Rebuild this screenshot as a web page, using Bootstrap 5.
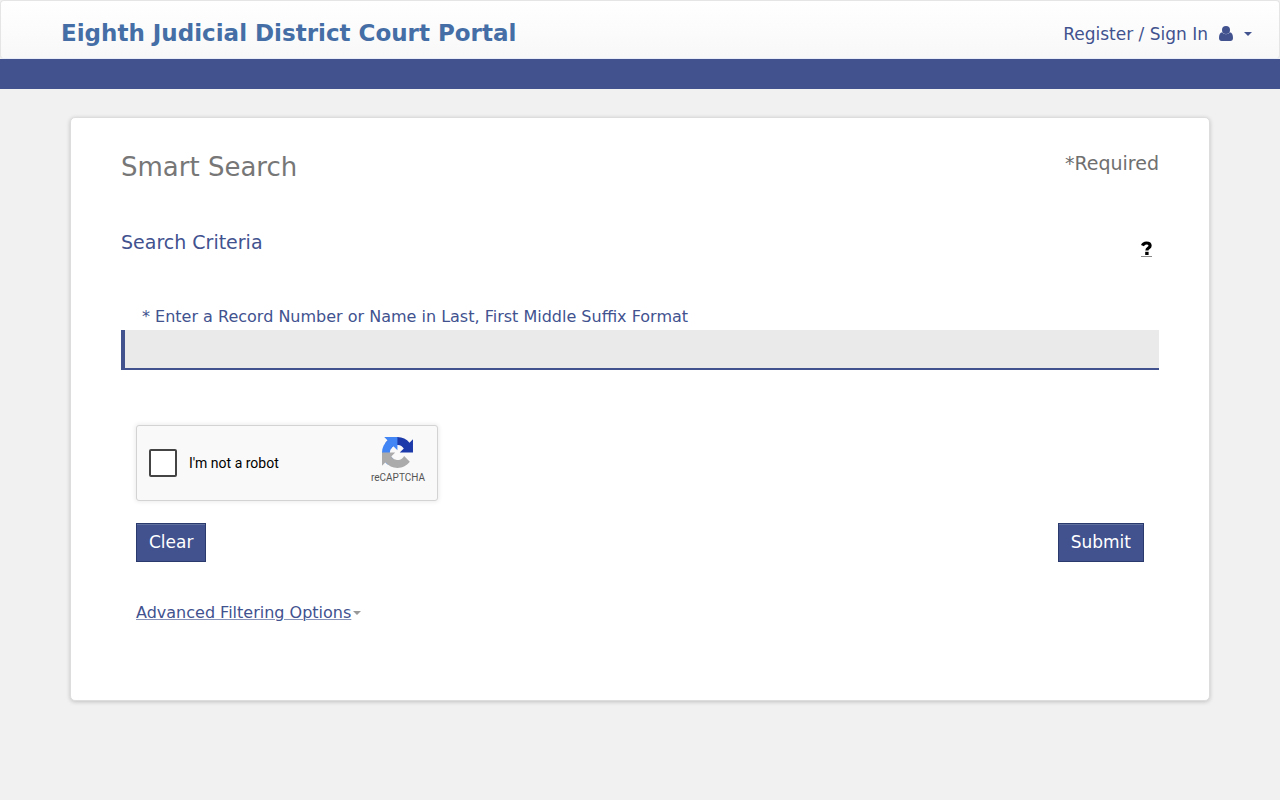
<!DOCTYPE html>
<html lang="en">
<head>
<meta charset="utf-8">
<meta name="viewport" content="width=device-width, initial-scale=1">
<title>Smart Search - Eighth Judicial District Court Portal</title>
<link rel="stylesheet" href="https://cdn.jsdelivr.net/npm/bootstrap@5.3.0/dist/css/bootstrap.min.css">
<style>
  :root { --portal: #41528f; }
  body { background: #f1f1f1; font-family: "DejaVu Sans", sans-serif; font-size: 16px; line-height: 24px; color: var(--portal); }
  .portal-nav { height: 59px; border: 1px solid #e5e5e5; border-bottom-color: #e8ecf8; border-radius: 4px; background: linear-gradient(#fff, #f8f8f8); padding: 6px 27px 0 60px; }
  .portal-nav .navbar-brand { font-size: 23px; font-weight: 700; color: #446ea5; }
  .sign-in { font-size: 17px; color: var(--portal); gap: 11px; padding-top: 2px; }
  .caret { width: 0; height: 0; border: 4px solid transparent; border-top-color: currentColor; border-bottom: 0; }
  .portal-bar { height: 30px; background: var(--portal); }
  .search-panel { margin-top: 28px; margin-bottom: 28px; padding: 33px 50px 75px; background: #fff; border: 1px solid #ddd; border-radius: 5px; box-shadow: 0 1px 4px rgba(0,0,0,.2); }
  .page-title { font-size: 26px; line-height: 32px; color: #777; }
  .required-note { font-size: 19px; color: #6f6f6f; }
  .criteria-head { margin-top: 47px; }
  .section-title { font-size: 19px; line-height: 24px; }
  .help-link { margin: 11px 7px 0 0; color: #000; border-bottom: 1px solid #888; }
  .criteria-label { padding: 0 21px 1px; }
  .criteria-input { height: 40px; background: #eaeaea; border: 0 solid var(--portal); border-width: 0 0 2px 4px; border-radius: 0; }
  .criteria-input:focus { background: #eaeaea; border-color: var(--portal); }
  .form-actions { margin-top: 55px; padding: 0 15px; }
  .captcha { width: 302px; max-width: 100%; height: 76px; padding: 0 12px; background: #f9f9f9; border: 1px solid #d3d3d3; border-radius: 3px; box-shadow: 0 0 4px 1px rgba(0,0,0,.08); font-family: Roboto, sans-serif; font-size: 14px; color: #000; }
  .captcha .form-check-input { width: 28px; height: 28px; border: 2px solid #444; border-radius: 2px; }
  .captcha-brand { padding-bottom: 6px; font-size: 10px; line-height: 12px; color: #555; }
  .btn-row { margin-top: 22px; }
  .btn-portal { --bs-btn-color: #fff; --bs-btn-bg: #41528f; --bs-btn-border-color: #2b3a6d; --bs-btn-hover-color: #fff; --bs-btn-hover-bg: #35457c; --bs-btn-hover-border-color: #2b3a6d; --bs-btn-font-size: 17px; --bs-btn-line-height: 25px; --bs-btn-border-radius: 0; box-shadow: inset 0 1px 0 #60709f; }
  .advanced-row { margin-top: 39px; gap: 2px; }
  .advanced-link { color: var(--portal); text-decoration-thickness: 1px; text-decoration-color: #8792b8; }
  .advanced-caret { color: #999; }
</style>
</head>
<body>
<header>
  <nav class="portal-nav d-flex align-items-center justify-content-between">
    <a class="navbar-brand m-0" href="#">Eighth Judicial District Court Portal</a>
    <a class="sign-in d-flex align-items-center text-decoration-none" href="#">Register / Sign In
      <svg width="14" height="15" viewBox="0 0 14 15" fill="currentColor" aria-hidden="true"><circle cx="7" cy="4" r="4"/><path d="M3.300 6.300C1 6.600 0 9 0 12c0 1.800 1 3 2.600 3h8.800c1.600 0 2.600-1.200 2.600-3 0-3-1-5.400-3.300-5.700C9.700 7.700 8.500 8.200 7 8.200S4.300 7.700 3.300 6.300z"/></svg>
      <span class="caret"></span>
    </a>
  </nav>
  <div class="portal-bar"></div>
</header>
<main class="search-panel container">
  <div class="d-flex justify-content-between align-items-start">
    <h1 class="page-title m-0">Smart Search</h1>
    <span class="required-note">*Required</span>
  </div>
  <form>
    <div class="criteria-head d-flex justify-content-between align-items-start">
      <h2 class="section-title m-0">Search Criteria</h2>
      <a class="help-link d-flex" href="#" aria-label="Help">
        <svg width="11" height="15" viewBox="0 0 11 15" aria-hidden="true"><path d="M1.500 4.600C2.200 2.700 3.600 2 5.400 2c2.300 0 3.700 1 3.700 2.700 0 2.500-3.200 2.200-3.200 4.700" fill="none" stroke="#000" stroke-width="3.200"/><path d="M4.200 10.800h3.400v3.200H4.200z"/></svg>
      </a>
    </div>
    <label class="criteria-label d-block mt-5" for="criteria">* Enter a Record Number or Name in Last, First Middle Suffix Format</label>
    <input class="criteria-input form-control shadow-none" type="text" id="criteria" required>
    <div class="form-actions">
      <div class="captcha d-flex align-items-center justify-content-between">
        <div class="d-flex align-items-center">
          <input class="form-check-input m-0" type="checkbox" id="robot">
          <label class="ps-2 ms-1" for="robot">I'm not a robot</label>
        </div>
        <div class="captcha-brand d-flex flex-column align-items-center">
          <svg width="31" height="31" viewBox="0 0 64 64" aria-hidden="true">
            <path fill="#1c3aa9" d="M64 31.955l-.033-1.370V4.687l-7.160 7.160C50.948 4.674 42.033.093 32.050.093c-10.389 0-19.622 4.960-25.458 12.640l11.736 11.860a15.550 15.550 0 0 1 4.754-5.334c2.050-1.600 4.952-2.906 8.968-2.906.485 0 .860.057 1.135.163 4.976.393 9.288 3.140 11.828 7.124l-8.307 8.307z"/>
            <path fill="#4285f4" d="M31.862.094l-1.370.033H4.594l7.160 7.160C4.580 13.147 0 22.060 0 32.046c0 10.388 4.960 19.622 12.640 25.458L24.500 45.768a15.550 15.550 0 0 1-5.334-4.754c-1.600-2.050-2.906-4.952-2.906-8.968 0-.485.057-.860.163-1.135.393-4.976 3.140-9.288 7.124-11.828l8.307 8.307z"/>
            <path fill="#ababab" d="M.001 32.045l.033 1.370v25.898l7.160-7.160c5.860 7.173 14.774 11.754 24.760 11.754 10.388 0 19.622-4.960 25.458-12.640l-11.736-11.860a15.550 15.550 0 0 1-4.754 5.334c-2.050 1.600-4.952 2.906-8.968 2.906-.485 0-.860-.057-1.135-.163-4.976-.393-9.288-3.140-11.828-7.124l8.307-8.307z"/>
          </svg>
          <span class="mt-1">reCAPTCHA</span>
        </div>
      </div>
      <div class="btn-row d-flex justify-content-between">
        <button class="btn btn-portal" type="reset">Clear</button>
        <button class="btn btn-portal" type="submit">Submit</button>
      </div>
      <div class="advanced-row d-flex align-items-center">
        <a class="advanced-link" href="#">Advanced Filtering Options</a>
        <span class="caret advanced-caret"></span>
      </div>
    </div>
  </form>
</main>
<script src="https://cdn.jsdelivr.net/npm/bootstrap@5.3.0/dist/js/bootstrap.bundle.min.js"></script>
</body>
</html>
